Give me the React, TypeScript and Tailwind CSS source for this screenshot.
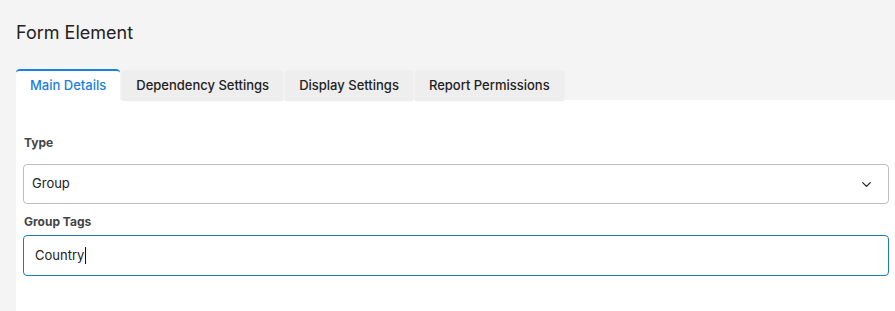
import { ChevronDown } from "lucide-react";

const tabs = ["Main Details", "Dependency Settings", "Display Settings", "Report Permissions"];

export default function App() {
  return (
    <div
      className="min-h-screen bg-[#f4f4f4] pl-4 pt-[22px] overflow-hidden"
      style={{ fontFamily: "Inter, 'Noto Sans', sans-serif" }}
    >
      <h1 className="text-[18px] leading-[22px] text-[#222]">Form Element</h1>

      <div className="mt-[25px] flex items-end gap-[2px]">
        {tabs.map((t, i) =>
          i === 0 ? (
            <div
              key={t}
              className="h-[31px] px-[14px] pt-[1px] flex items-center bg-white border-t-2 border-[#1a82e2] rounded-t-[4px] text-[13px] font-medium text-[#1a7fe0]"
            >
              {t}
            </div>
          ) : (
            <div
              key={t}
              className="h-[30px] px-[14px] pt-[2px] flex items-center bg-[#eeeeee] rounded-t-[4px] shadow-[0_1px_1px_rgba(0,0,0,0.08)] text-[13px] font-medium text-[#222]"
            >
              {t}
            </div>
          )
        )}
      </div>

      <div className="bg-white pl-[7px] pr-[6px] pt-[36px] pb-10">
        <label className="block text-[12px] leading-[14px] font-bold text-[#444] pl-[1px]">Type</label>
        <div className="mt-[14px] h-[40px] border border-[#bdbdbd] rounded-[4px] flex items-center justify-between pl-[8px] pr-[14px] text-[13px] text-[#222]">
          <span>Group</span>
          <ChevronDown size={15} strokeWidth={2} className="text-[#222]" />
        </div>

        <label className="block mt-[11px] text-[12px] leading-[14px] font-bold text-[#444] pl-[1px]">Group Tags</label>
        <div className="mt-[6px] h-[41px] border border-[#1a7bb9] rounded-[4px] flex items-center pl-[11px] text-[13px] text-[#222]">
          <span>Country</span>
          <span className="ml-[1px] w-[1px] h-[17px] bg-[#111]" />
        </div>

        <label className="block mt-[33px] text-[12px] leading-[14px] font-bold text-[#444] pl-[1px]">Label</label>
      </div>
    </div>
  );
}
